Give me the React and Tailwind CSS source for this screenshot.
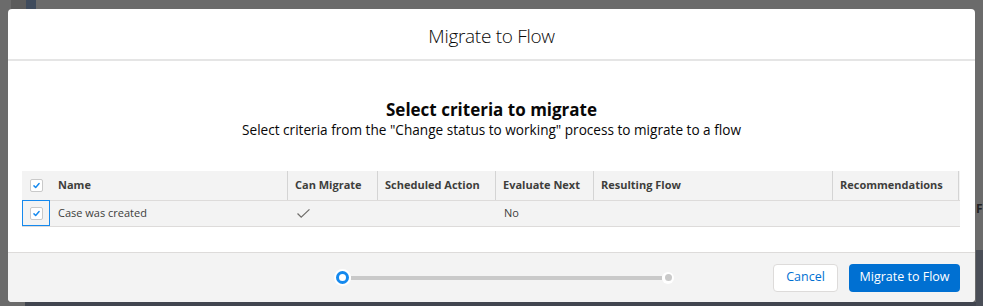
import React from "react";

const font = { fontFamily: '"Open Sans", "Noto Sans", sans-serif' };

function Check({ className = "" }) {
  return (
    <svg viewBox="0 0 10 10" className={className}>
      <path d="M2.2 5.4 L4.1 7.2 L7.9 2.8" fill="none" stroke="#1589ee" strokeWidth="1.6" strokeLinecap="round" strokeLinejoin="round" />
    </svg>
  );
}

function Box() {
  return (
    <div className="w-[13px] h-[13px] bg-white border border-[#c9c9c9] rounded-[2px] flex items-center justify-center">
      <Check className="w-[9px] h-[9px]" />
    </div>
  );
}

const cols = [
  { label: "Can Migrate", w: "w-[90px]" },
  { label: "Scheduled Action", w: "w-[118px]" },
  { label: "Evaluate Next", w: "w-[98px]" },
  { label: "Resulting Flow", w: "w-[239px]" },
  { label: "Recommendations", w: "w-[126px]" },
];

export default function App() {
  return (
    <div className="relative w-[983px] h-[306px] bg-[#6b6b6b] overflow-hidden" style={font}>
      {/* background fragments */}
      <div className="absolute left-[11px] top-0 w-[15px] h-[9px] bg-[#5c5c5c]" />
      <div className="absolute left-[26px] top-0 w-[10px] h-[9px] bg-[#3f4b5c]" />
      <div className="absolute left-[25px] top-[302px] w-[958px] h-[4px] bg-[#41454f]" />
      <div className="absolute left-[976px] top-[250px] w-[7px] h-[56px] bg-[#4a4e57]" />
      <div className="absolute left-[976px] top-[200px] text-[12px] font-bold text-[#222]">F</div>

      <div className="relative pt-[9px] pl-[8px]">
        <div className="w-[967px] h-[293px] bg-white rounded-[4px] overflow-hidden flex flex-col">
          <div className="h-[52px] pt-[5px] border-b-2 border-[#e5e5e5] flex items-center justify-center">
            <span className="text-[19px] font-light text-[#080707] tracking-[-0.3px]">Migrate to Flow</span>
          </div>
          <div className="flex-1 flex flex-col">
            <div className="pt-[38px] flex flex-col items-center">
              <div className="text-[17px] font-bold text-[#080707] leading-[22px]">Select criteria to migrate</div>
              <div className="text-[13.6px] text-[#080707] leading-[18px]">
                Select criteria from the "Change status to working" process to migrate to a flow
              </div>
            </div>
            <div className="mt-[32px] ml-[14px] w-[938px] text-[11px] text-[#3e3e3c]">
              <div className="flex h-[30px] bg-[#f3f3f3] border-b border-[#dddbda] font-bold">
                <div className="w-[28px] flex items-center justify-center">
                  <Box />
                </div>
                <div className="w-[238px] flex items-center pl-[8px] border-r border-[#d4d4d4]">Name</div>
                {cols.map((c) => (
                  <div key={c.label} className={`${c.w} flex items-center pl-[7px] border-r border-[#d4d4d4]`}>
                    {c.label}
                  </div>
                ))}
              </div>
              <div className="flex h-[26px] bg-[#f3f3f3] border-b border-[#dddbda]">
                <div className="w-[28px] flex items-center justify-center border border-[#1589ee] -mt-px">
                  <Box />
                </div>
                <div className="w-[238px] flex items-center pl-[8px]">Case was created</div>
                <div className="w-[90px] flex items-center pl-[8px]">
                  <svg viewBox="0 0 16 12" className="w-[15px] h-[11px]">
                    <path d="M1.5 6 L5.5 10 L14.5 1.5" fill="none" stroke="#706e6b" strokeWidth="1.4" />
                  </svg>
                </div>
                <div className="w-[118px]" />
                <div className="w-[98px] flex items-center pl-[8px]">No</div>
                <div className="w-[239px]" />
                <div className="w-[126px]" />
              </div>
            </div>
          </div>
          <div className="h-[50px] bg-[#f3f3f3] border-t border-[#dddbda] flex items-center">
            <div className="ml-[326px] flex items-center">
              <div className="w-[17px] h-[17px] rounded-full bg-white flex items-center justify-center">
                <div className="w-[13px] h-[13px] rounded-full border-[3.5px] border-[#1589ee] bg-white" />
              </div>
              <div className="w-[311px] h-[4px] bg-[#c9c9c9]" />
              <div className="w-[12px] h-[12px] rounded-full bg-white flex items-center justify-center">
                <div className="w-[7px] h-[7px] rounded-full bg-[#c9c9c9]" />
              </div>
            </div>
            <div className="ml-auto mr-[15px] flex items-center gap-[11px]">
              <button className="h-[28px] w-[65px] bg-white border border-[#dddbda] rounded-[4px] text-[12.5px] text-[#0070d2]">
                Cancel
              </button>
              <button className="h-[28px] w-[111px] bg-[#0070d2] rounded-[4px] text-[12.5px] text-white">
                Migrate to Flow
              </button>
            </div>
          </div>
        </div>
      </div>
    </div>
  );
}
